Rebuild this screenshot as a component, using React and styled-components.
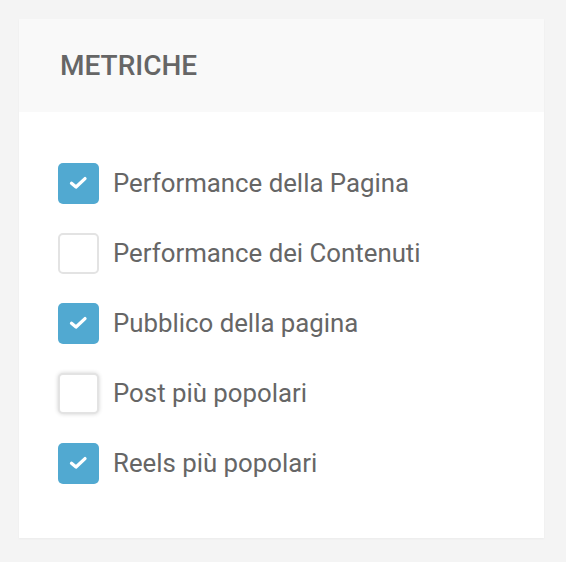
import React from "react";
import styled, { createGlobalStyle } from "styled-components";

const Global = createGlobalStyle`
  html, body { margin: 0; padding: 0; background: #f4f4f4; }
  body { font-family: Roboto, "Liberation Sans", sans-serif; }
`;

const Page = styled.div`
  padding: 19px 22px 23px 19px;
`;

const Card = styled.section`
  width: 525px;
  background: #fff;
  box-shadow: 0 1px 2px rgba(0, 0, 0, 0.04);
`;

const Header = styled.header`
  height: 93px;
  display: flex;
  align-items: center;
  padding-left: 41px;
  background: #f9f9f9;
`;

const Title = styled.h2`
  margin: 0;
  font-size: 28px;
  font-weight: 500;
  color: #666;
  letter-spacing: 0;
`;

const Body = styled.div`
  display: flex;
  flex-direction: column;
  gap: 30px;
  padding: 51px 0 55px 39px;
`;

const Row = styled.label`
  display: flex;
  align-items: center;
  gap: 14px;
  height: 40px;
  cursor: pointer;
`;

const Box = styled.span`
  box-sizing: border-box;
  flex: none;
  width: 41px;
  height: 41px;
  border-radius: 5px;
  display: flex;
  align-items: center;
  justify-content: center;
  background: ${(p) => (p.$checked ? "#51a9d1" : "#fff")};
  border: ${(p) => (p.$checked ? "none" : "2px solid #e3e3e3")};
  box-shadow: ${(p) => (p.$focus ? "0 0 4px rgba(0,0,0,0.18)" : "none")};
`;

const Label = styled.span`
  font-size: 25.8px;
  line-height: 1;
  padding-top: 2px;
  color: #666;
`;

const Check = () => (
  <svg width="19" height="14" viewBox="0 0 19 14" fill="none">
    <path d="M2.5 7.2 L7 11 L16 2.6" stroke="#fff" strokeWidth="3.3" strokeLinecap="round" strokeLinejoin="round" />
  </svg>
);

const items = [
  { label: "Performance della Pagina", checked: true },
  { label: "Performance dei Contenuti", checked: false },
  { label: "Pubblico della pagina", checked: true },
  { label: "Post più popolari", checked: false, focus: true },
  { label: "Reels più popolari", checked: true },
];

export default function App() {
  return (
    <>
      <Global />
      <Page>
        <Card>
          <Header>
            <Title>METRICHE</Title>
          </Header>
          <Body>
            {items.map((it) => (
              <Row key={it.label}>
                <Box $checked={it.checked} $focus={it.focus}>
                  {it.checked && <Check />}
                </Box>
                <Label>{it.label}</Label>
              </Row>
            ))}
          </Body>
        </Card>
      </Page>
    </>
  );
}
